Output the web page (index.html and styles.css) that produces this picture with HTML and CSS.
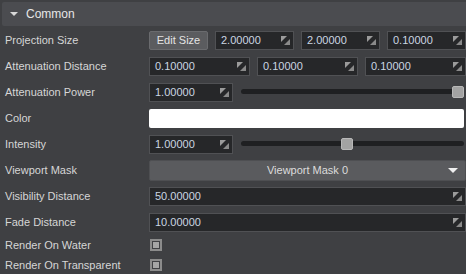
FILE: index.html
```html
<!DOCTYPE html>
<html lang="en">

<head>
  <meta charset="UTF-8">
  <title>Common</title>
  <link rel="stylesheet" href="styles.css">
</head>

<body>
  <div class="header">
    <span class="caret"></span>
    <span>Common</span>
  </div>

  <div class="props">
    <div class="label">Projection Size</div>
    <div class="value">
      <button class="btn">Edit Size</button>
      <div class="field"><span>2.00000</span><svg class="drag" viewBox="0 0 9 9"><polygon points="0,0 6,0 0,6" fill="#9b9b9b"/><polygon points="9,3 9,9 3,9" fill="#8a8a8a"/></svg></div>
      <div class="field"><span>2.00000</span><svg class="drag" viewBox="0 0 9 9"><polygon points="0,0 6,0 0,6" fill="#9b9b9b"/><polygon points="9,3 9,9 3,9" fill="#8a8a8a"/></svg></div>
      <div class="field"><span>0.10000</span><svg class="drag" viewBox="0 0 9 9"><polygon points="0,0 6,0 0,6" fill="#9b9b9b"/><polygon points="9,3 9,9 3,9" fill="#8a8a8a"/></svg></div>
    </div>

    <div class="label">Attenuation Distance</div>
    <div class="value">
      <div class="field"><span>0.10000</span><svg class="drag" viewBox="0 0 9 9"><polygon points="0,0 6,0 0,6" fill="#9b9b9b"/><polygon points="9,3 9,9 3,9" fill="#8a8a8a"/></svg></div>
      <div class="field"><span>0.10000</span><svg class="drag" viewBox="0 0 9 9"><polygon points="0,0 6,0 0,6" fill="#9b9b9b"/><polygon points="9,3 9,9 3,9" fill="#8a8a8a"/></svg></div>
      <div class="field"><span>0.10000</span><svg class="drag" viewBox="0 0 9 9"><polygon points="0,0 6,0 0,6" fill="#9b9b9b"/><polygon points="9,3 9,9 3,9" fill="#8a8a8a"/></svg></div>
    </div>

    <div class="label">Attenuation Power</div>
    <div class="value">
      <div class="field short"><span>1.00000</span><svg class="drag" viewBox="0 0 9 9"><polygon points="0,0 6,0 0,6" fill="#9b9b9b"/><polygon points="9,3 9,9 3,9" fill="#8a8a8a"/></svg></div>
      <div class="slider"><div class="track"></div><div class="thumb" style="left: 100%"></div></div>
    </div>

    <div class="label">Color</div>
    <div class="value">
      <div class="color"></div>
    </div>

    <div class="label">Intensity</div>
    <div class="value">
      <div class="field short"><span>1.00000</span><svg class="drag" viewBox="0 0 9 9"><polygon points="0,0 6,0 0,6" fill="#9b9b9b"/><polygon points="9,3 9,9 3,9" fill="#8a8a8a"/></svg></div>
      <div class="slider"><div class="track"></div><div class="thumb" style="left: 50%"></div></div>
    </div>

    <div class="label">Viewport Mask</div>
    <div class="value">
      <div class="combo">Viewport Mask 0<span class="arrow"></span></div>
    </div>

    <div class="label">Visibility Distance</div>
    <div class="value">
      <div class="field"><span>50.00000</span><svg class="drag" viewBox="0 0 9 9"><polygon points="0,0 6,0 0,6" fill="#9b9b9b"/><polygon points="9,3 9,9 3,9" fill="#8a8a8a"/></svg></div>
    </div>

    <div class="label">Fade Distance</div>
    <div class="value">
      <div class="field"><span>10.00000</span><svg class="drag" viewBox="0 0 9 9"><polygon points="0,0 6,0 0,6" fill="#9b9b9b"/><polygon points="9,3 9,9 3,9" fill="#8a8a8a"/></svg></div>
    </div>

    <div class="label">Render On Water</div>
    <div class="value"><span class="check"></span></div>

    <div class="label">Render On Transparent</div>
    <div class="value"><span class="check"></span></div>
  </div>
</body>

</html>
```

FILE: styles.css
```css
body {
  margin: 0;
  padding: 2px 0 0 2px;
  background-color: #3f4043;
  color: #d6d6d6;
  font-family: "Liberation Sans", Arial, sans-serif;
  font-size: 11px;
  overflow: hidden;
}

.header {
  display: flex;
  align-items: center;
  gap: 8px;
  height: 24px;
  padding-left: 8px;
  background-color: #4b4c50;
  border-radius: 2px 0 0 2px;
  color: #e6e6e6;
  font-size: 12px;
}

.caret {
  width: 0;
  height: 0;
  border-left: 4px solid transparent;
  border-right: 4px solid transparent;
  border-top: 4px solid #d8d8d8;
}

.props {
  display: grid;
  grid-template-columns: 144px 317px;
  grid-template-rows: repeat(8, 26px) 20px 20px;
  padding: 1px 0 0 3px;
}

.label {
  display: flex;
  align-items: center;
  white-space: nowrap;
}

.value {
  display: flex;
  align-items: center;
  gap: 7px;
}

.btn {
  width: 59px;
  height: 19px;
  padding: 0;
  background-color: #5b5c5f;
  border: 1px solid #6a6b6e;
  border-radius: 2px;
  color: #e4e4e4;
  font-family: inherit;
  font-size: 11px;
}

.field {
  flex: 1;
  display: flex;
  align-items: center;
  justify-content: space-between;
  height: 17px;
  padding: 0 3px 0 5px;
  background-color: #262729;
  border: 1px solid #505154;
  color: #cbd6e2;
}

.field.short {
  flex: 0 0 74px;
}

.drag {
  width: 9px;
  height: 9px;
}

.slider {
  position: relative;
  flex: 1;
  height: 14px;
  margin: 0 2px 0 1px;
}

.track {
  position: absolute;
  left: 0;
  right: 0;
  top: 4px;
  height: 5px;
  background-color: #1f2022;
  border-radius: 3px;
}

.thumb {
  position: absolute;
  top: 1px;
  width: 10px;
  height: 10px;
  margin-left: -12px;
  background-color: #a3a3a3;
  border: 1px solid #b8b8b8;
  border-radius: 2px;
}

.color {
  flex: 1;
  height: 19px;
  margin-right: 2px;
  background-color: #ffffff;
  border-radius: 2px;
}

.combo {
  position: relative;
  flex: 1;
  height: 19px;
  line-height: 19px;
  text-align: center;
  background-color: #5a5b5e;
  border: 1px solid #4e4f52;
  border-radius: 2px;
  color: #dcdcdc;
}

.arrow {
  position: absolute;
  right: 7px;
  top: 7px;
  border-left: 5px solid transparent;
  border-right: 5px solid transparent;
  border-top: 5px solid #f0f0f0;
}

.check {
  display: block;
  width: 6px;
  height: 6px;
  margin-left: 3px;
  background-color: #a5a5a5;
  border: 1px solid #3f4043;
  box-shadow: 0 0 0 2px #8c8c8c;
}
```
